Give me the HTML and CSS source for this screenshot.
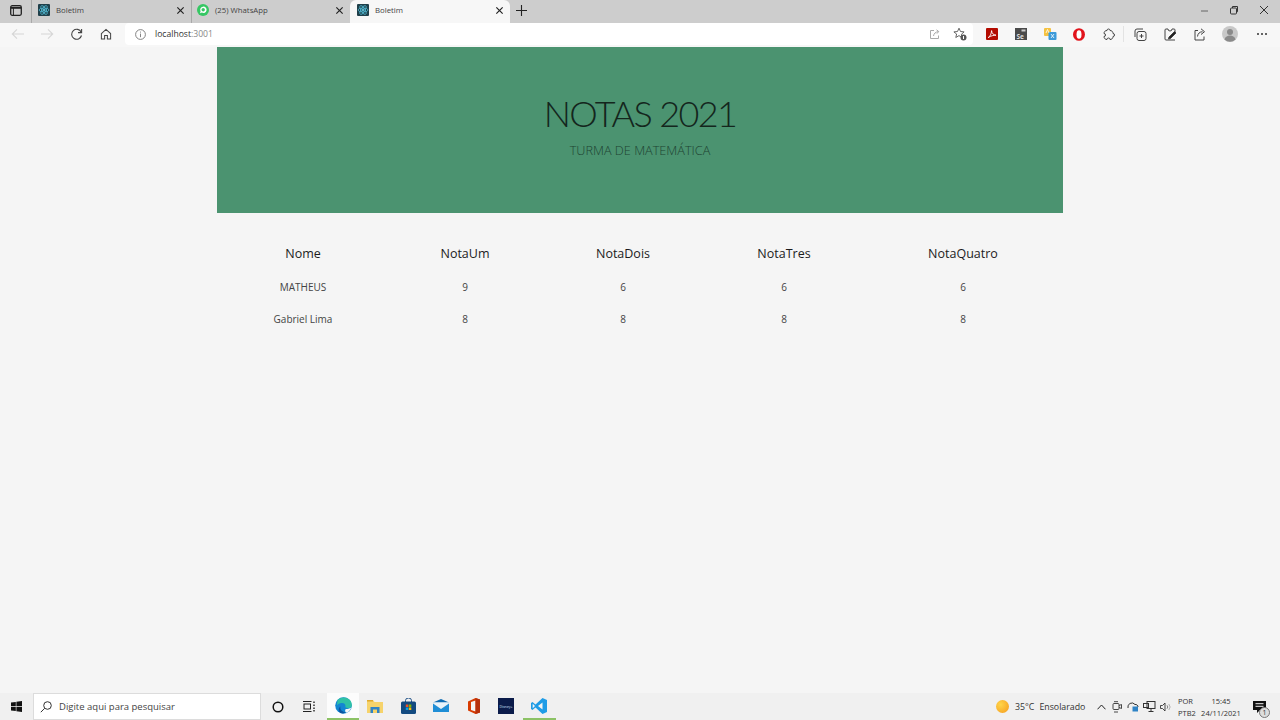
FILE: index.html
```html
<!DOCTYPE html>
<html lang="pt-BR">
<head>
    <meta charset="UTF-8">
    <meta name="viewport" content="width=device-width, initial-scale=1.0">
    <title>Boletim</title>
    <link rel="stylesheet" href="styles.css">
</head>
<body>
    <svg class="defs" width="0" height="0">
        <symbol id="react" viewBox="0 0 12 12">
            <rect width="12" height="12" rx="1" fill="#1f3f4a"/>
            <g fill="none" stroke="#4fb6cf" stroke-width=".8">
                <ellipse cx="6" cy="6" rx="5" ry="2"/>
                <ellipse cx="6" cy="6" rx="5" ry="2" transform="rotate(60 6 6)"/>
                <ellipse cx="6" cy="6" rx="5" ry="2" transform="rotate(120 6 6)"/>
            </g>
            <circle cx="6" cy="6" r="1.1" fill="#6fd0e6"/>
        </symbol>
        <symbol id="close" viewBox="0 0 10 10">
            <path d="M1.5 1.5l7 7M8.5 1.5l-7 7" stroke="#222" stroke-width="1.3" fill="none"/>
        </symbol>
    </svg>

    <!-- abas do navegador -->
    <div class="tabstrip">
        <div class="tab-menu">
            <svg width="12" height="11" viewBox="0 0 12 11"><rect x=".7" y=".7" width="10.6" height="9.6" rx="1.5" fill="none" stroke="#222" stroke-width="1.3"/><path d="M1 2.8h10" stroke="#222" stroke-width="2"/><path d="M3.4 3v7" stroke="#222" stroke-width="1"/></svg>
        </div>
        <div class="tab tab-first">
            <svg class="favicon" width="12" height="12"><use href="#react"/></svg>
            <span class="tab-title">Boletim</span>
            <svg class="tab-close" width="9" height="9"><use href="#close"/></svg>
        </div>
        <div class="tab tab-second">
            <svg class="favicon" width="12" height="12" viewBox="0 0 12 12"><circle cx="6" cy="6" r="6" fill="#35c763"/><path d="M3 9.2l.6-1.9a3.2 3.2 0 1 1 1.3 1.3z" fill="#fff"/><circle cx="6.2" cy="5.7" r="1.7" fill="#35c763"/></svg>
            <span class="tab-title">(25) WhatsApp</span>
            <svg class="tab-close" width="9" height="9"><use href="#close"/></svg>
        </div>
        <div class="tab tab-active">
            <svg class="favicon" width="12" height="12"><use href="#react"/></svg>
            <span class="tab-title">Boletim</span>
            <svg class="tab-close" width="9" height="9"><use href="#close"/></svg>
        </div>
        <div class="tab-new">
            <svg width="11" height="11" viewBox="0 0 11 11"><path d="M5.5 0v11M0 5.5h11" stroke="#222" stroke-width="1.1"/></svg>
        </div>
        <div class="win-controls">
            <div class="win-btn"><svg width="9" height="9" viewBox="0 0 9 9"><path d="M1 5h7" stroke="#666" stroke-width="1"/></svg></div>
            <div class="win-btn"><svg width="10" height="10" viewBox="0 0 10 10" fill="none" stroke="#333"><rect x="1.5" y="3" width="6" height="6" rx="1"/><path d="M3.5 3V1.5h5v5.2H7.5"/></svg></div>
            <div class="win-btn"><svg width="10" height="10" viewBox="0 0 10 10"><path d="M1 1l8 8M9 1l-8 8" stroke="#333" stroke-width="1"/></svg></div>
        </div>
    </div>

    <!-- barra de endereco -->
    <div class="toolbar">
        <div class="nav-btn"><svg width="14" height="12" viewBox="0 0 14 12" fill="none" stroke="#d6d6d6" stroke-width="1.1"><path d="M13 6H1.5M6 1.3L1.3 6 6 10.7"/></svg></div>
        <div class="nav-btn"><svg width="14" height="12" viewBox="0 0 14 12" fill="none" stroke="#d6d6d6" stroke-width="1.1"><path d="M1 6h11.5M8 1.3L12.7 6 8 10.7"/></svg></div>
        <div class="nav-btn"><svg width="13" height="13" viewBox="0 0 13 13" fill="none" stroke="#444" stroke-width="1.1"><path d="M11.2 4.2A5 5 0 1 0 11.5 7.5"/><path d="M11.6 1v3.6H8"/></svg></div>
        <div class="nav-btn"><svg width="12" height="12" viewBox="0 0 13 13" fill="none" stroke="#444" stroke-width="1.1"><path d="M1.5 6L6.5 1.5 11.5 6v5.8H8V8H5v3.8H1.5z"/></svg></div>
        <div class="address">
            <svg class="info" width="11" height="11" viewBox="0 0 11 11" fill="none" stroke="#777" stroke-width=".9"><circle cx="5.5" cy="5.5" r="4.9"/><path d="M5.5 4.6v3.6M5.5 2.6v1"/></svg>
            <span class="url">localhost<span class="url-port">:3001</span></span>
            <svg class="addr-share" width="11" height="11" viewBox="0 0 11 11" fill="none" stroke="#aaa"><path d="M5 1.5H1.5v8h8V6.5"/><path d="M4.5 7c.3-2.5 2-4 5-4.5M7.5 .8l2.2 1.7L8 4.6"/></svg>
            <svg class="addr-fav" width="14" height="14" viewBox="0 0 14 14"><path d="M6 1.2l1.5 3.3 3.6.4-2.7 2.4.8 3.5L6 8.6l-3.2 1.9.8-3.5L.9 4.9l3.6-.4z" fill="none" stroke="#555" stroke-width=".9"/><circle cx="10.5" cy="10.5" r="3" fill="#555"/><rect x="10" y="9" width="1" height="3" fill="#fff"/></svg>
        </div>
        <div class="ext-btn first-ext"><svg width="12" height="12" viewBox="0 0 12 12"><rect width="12" height="12" rx="1" fill="#b30b00"/><path d="M2.2 9.6C4 8.6 5.4 5.8 5.6 2.6c.2 2.8 1.6 4.2 4.4 4.6-2.5 0-5 .6-7.8 2.4z" fill="none" stroke="#fff" stroke-width=".9"/></svg></div>
        <div class="ext-btn"><svg width="12" height="12" viewBox="0 0 12 12"><rect width="12" height="12" fill="#4a4a4a"/><rect x="6.5" y="1.5" width="4" height="2" fill="#ccc"/><text x="1.5" y="10.5" class="ext-text">Se</text></svg></div>
        <div class="ext-btn"><svg width="14" height="14" viewBox="0 0 14 14"><rect x="1" y="1" width="7" height="8" rx="1" fill="#f5c242"/><rect x="5.5" y="5" width="8" height="8" rx="1" fill="#3d9ad9"/><path d="M8 11l3-4M8 7l3 4" stroke="#fff" stroke-width=".8"/><path d="M3 6l1.5-3.5L6 6" stroke="#fff" stroke-width=".8" fill="none"/></svg></div>
        <div class="ext-btn"><svg width="12" height="13" viewBox="0 0 12 13"><ellipse cx="6" cy="6.5" rx="6" ry="6.3" fill="#e2141c"/><ellipse cx="6" cy="6.5" rx="2.5" ry="4.3" fill="#fff"/></svg></div>
        <div class="ext-btn"><svg width="13" height="13" viewBox="0 0 13 13" fill="none" stroke="#444" stroke-width="1"><path d="M5 2.5a1.5 1.5 0 0 1 3 0c1.8 0 3 1.2 3 3a1.5 1.5 0 0 1 0 3c0 1.8-1.2 3-3 3a1.5 1.5 0 0 0-3 0c-1.8 0-3-1.2-3-3a1.5 1.5 0 0 0 0-3c0-1.8 1.2-3 3-3z"/></svg></div>
        <div class="tool-sep"></div>
        <div class="ext-btn"><svg width="13" height="13" viewBox="0 0 13 13" fill="none" stroke="#444" stroke-width="1"><rect x="3" y="3.5" width="9" height="9" rx="2"/><path d="M1 9V3a2 2 0 0 1 2-2h6M5.5 8h4M7.5 6v4"/></svg></div>
        <div class="ext-btn"><svg width="14" height="14" viewBox="0 0 14 14" fill="none" stroke="#444"><path d="M3 2h2a2 2 0 0 0 4 0h2a1 1 0 0 1 1 1v3M12 13H3a1 1 0 0 1-1-1V3a1 1 0 0 1 1-1"/><path d="M6 10l5.5-5.5 1.5 1.5-5.5 5.5-2 .5z" fill="#222"/></svg></div>
        <div class="ext-btn"><svg width="13" height="13" viewBox="0 0 13 13" fill="none" stroke="#444" stroke-width="1"><path d="M5 2.5H2V12h9V8.5"/><path d="M4.5 8.5c.3-3 2.2-4.7 5-4.8M8 .8l3.5 2.9L8 6.500"/></svg></div>
        <div class="avatar-btn"><svg width="16" height="16" viewBox="0 0 16 16"><circle cx="8" cy="8" r="8" fill="#c8c8c8"/><circle cx="8" cy="6" r="3" fill="#8a8a8a"/><path d="M2.5 13.5c.8-3 3-4 5.500-4s4.700 1 5.500 4a8 8 0 0 1-11 0z" fill="#8a8a8a"/></svg></div>
        <div class="more-btn"><span class="dot"></span><span class="dot"></span><span class="dot"></span></div>
    </div>

    <!-- pagina -->
    <div class="page">
        <div class="container">
            <header class="hero">
                <h1 class="hero-title">NOTAS 2021</h1>
                <p class="hero-sub">TURMA DE MATEMÁTICA</p>
            </header>
            <table class="grades">
                <colgroup>
                    <col class="col-nome">
                    <col class="col-um">
                    <col class="col-dois">
                    <col class="col-tres">
                    <col class="col-quatro">
                </colgroup>
                <thead>
                    <tr>
                        <th>Nome</th>
                        <th>NotaUm</th>
                        <th>NotaDois</th>
                        <th>NotaTres</th>
                        <th>NotaQuatro</th>
                    </tr>
                </thead>
                <tbody>
                    <tr>
                        <td>MATHEUS</td>
                        <td>9</td>
                        <td>6</td>
                        <td>6</td>
                        <td>6</td>
                    </tr>
                    <tr>
                        <td>Gabriel Lima</td>
                        <td>8</td>
                        <td>8</td>
                        <td>8</td>
                        <td>8</td>
                    </tr>
                </tbody>
            </table>
        </div>
    </div>

    <!-- barra de tarefas -->
    <div class="taskbar">
        <div class="start"><svg width="11" height="11" viewBox="0 0 11 11"><path d="M0 1.6L4.8.9v4.2H0zM5.4.8L11 0v5.1H5.4zM0 5.8h4.8v4.3L0 9.4zM5.4 5.8H11V11l-5.6-.8z" fill="#111"/></svg></div>
        <div class="search">
            <svg width="12" height="12" viewBox="0 0 12 12" fill="none" stroke="#333"><circle cx="7.5" cy="4.5" r="3.8"/><path d="M4.7 7.3L.8 11.2"/></svg>
            <span>Digite aqui para pesquisar</span>
        </div>
        <div class="task-btn cortana"><svg width="12" height="12" viewBox="0 0 12 12"><circle cx="6" cy="6" r="4.8" fill="none" stroke="#111" stroke-width="1.5"/></svg></div>
        <div class="task-btn"><svg width="12" height="11" viewBox="0 0 12 11" fill="none" stroke="#222"><path d="M0 .5h8.5M0 10.5h8.5"/><rect x="1" y="3" width="6.5" height="5"/><path d="M11 .5V2M11 3.5V5M11 6.5V8M11 9v1.5" stroke-width="1.4"/></svg></div>
        <div class="app app-on app-edge">
            <svg width="17" height="17" viewBox="0 0 17 17"><circle cx="8.5" cy="8.5" r="8.3" fill="#1386d2"/><path d="M2.5 3C5.5-.5 12-.5 15 3c2 2.5 2.2 5 1.5 7-1.5 1.5-5 1.5-6.300 0 1-2.500-1-4.500-3.700-4C4.500 6 3 7 2 8.500z" fill="#2fc1a6"/><path d="M10.800 12c1.800 0 3.700-.3 5.400-1.200-.7 2-2 3.800-4.200 5-2.200-.2-2.200-3-1.200-3.800z" fill="#f7f7f7"/><path d="M5.500 9.500c-.8 3 1.500 5.500 5.500 5.800-1.500.9-3.200 1.400-5 1-3-1.500-2.800-5.500-.5-6.800z" fill="#0b55a0"/></svg>
        </div>
        <div class="app">
            <svg width="16" height="14" viewBox="0 0 16 14"><path d="M0 1h6l1.5 2H16v11H0z" fill="#f6d36b"/><rect y="1" width="6" height="1.5" fill="#e0a92c"/><rect x="3.5" y="8" width="9" height="6" fill="#2f83c6"/><rect x="6" y="10.5" width="4" height="3.5" fill="#f6d36b"/></svg>
        </div>
        <div class="app">
            <svg width="15" height="16" viewBox="0 0 15 16"><path d="M4.5 4V2.5a3 2.5 0 0 1 6 0V4" fill="none" stroke="#1d4f86"/><rect y="3.5" width="15" height="12.5" rx="1.5" fill="#134a80"/><rect x="4.8" y="6.5" width="2.5" height="2.5" fill="#f25022"/><rect x="7.8" y="6.5" width="2.5" height="2.5" fill="#7fba00"/><rect x="4.8" y="9.5" width="2.5" height="2.5" fill="#00a4ef"/><rect x="7.8" y="9.5" width="2.5" height="2.5" fill="#ffb900"/></svg>
        </div>
        <div class="app">
            <svg width="16" height="13" viewBox="0 0 16 13"><path d="M0 3.5L8 0l8 3.5z" fill="#0f6cb3"/><path d="M0 3.5h16L8 9z" fill="#e8f4fc"/><path d="M0 13V4.5L8 10l8-5.5V13z" fill="#1f8ed6"/></svg>
        </div>
        <div class="app">
            <svg width="12" height="16" viewBox="0 0 12 16"><path d="M0 3.5L7.5 0 12 1.5v13L7.5 16 0 12.5z" fill="#d83b01"/><path d="M7.5 2.5L3 4v8l4.5 1.5z" fill="#f4f4f4"/><path d="M12 1.5v13l-4.5 1.5V0z" fill="#b7300b"/></svg>
        </div>
        <div class="app">
            <svg width="16" height="16" viewBox="0 0 16 16"><rect width="16" height="16" fill="#0b1b4a"/><text x="8" y="10" class="disney-text">Disney+</text></svg>
        </div>
        <div class="app app-on app-code">
            <svg width="16" height="16" viewBox="0 0 16 16"><path d="M11.5 0L16 2v12l-4.5 2-7-6.5L1.500 12 0 11V5l1.500-1 3 2.500z" fill="#1f9ce6"/><path d="M11.5 4.5L7 8l4.500 3.500z" fill="#f4f4f4"/><path d="M1.7 5.8L4 8l-2.300 2.200z" fill="#f4f4f4"/></svg>
        </div>
        <div class="tray">
            <div class="weather">
                <span class="sun"></span>
                <span class="temp">35°C</span>
                <span>Ensolarado</span>
            </div>
            <div class="tray-icon"><svg width="9" height="6" viewBox="0 0 9 6" fill="none" stroke="#222"><path d="M.5 5.3L4.5 1l4 4.3"/></svg></div>
            <div class="tray-icon"><svg width="10" height="12" viewBox="0 0 10 12" fill="none" stroke="#333" stroke-width=".9"><rect x="1" y="2.5" width="6" height="6" rx="1"/><path d="M7 4.5L9.5 3.500v4L7 6.500M2 .7h4M2 11h4"/></svg></div>
            <div class="tray-icon"><svg width="12" height="11" viewBox="0 0 12 11"><path d="M1 7a4 4 0 0 1 7-3.500A2.500 2.500 0 0 1 11 6" fill="none" stroke="#333"/><rect x="5.5" y="5.5" width="5.5" height="5" fill="#2f83c6"/></svg></div>
            <div class="tray-icon"><svg width="13" height="12" viewBox="0 0 13 12" fill="none" stroke="#333"><rect x=".5" y="2.5" width="5" height="4"/><rect x="4" y=".5" width="8" height="7"/><path d="M8 7.5v3M5.5 10.5h5"/></svg></div>
            <div class="tray-icon"><svg width="11" height="10" viewBox="0 0 11 10" fill="none" stroke="#333" stroke-width=".9"><path d="M.5 3.5h2L5 1v8L2.5 6.5h-2z"/><path d="M7 3.3a2.5 2.5 0 0 1 0 3.4" stroke="#777"/><path d="M8.8 2a4.5 4.5 0 0 1 0 6" stroke="#aaa"/></svg></div>
            <div class="lang"><span>POR</span><span>PTB2</span></div>
            <div class="clock"><span>15:45</span><span>24/11/2021</span></div>
            <div class="notify">
                <svg width="13" height="12" viewBox="0 0 13 12"><path d="M0 0h13v9H7l-3 3V9H0z" fill="#111"/><path d="M2.5 2.7h8M2.5 5.3h8" stroke="#f0f0f0"/></svg>
                <span class="notify-count">1</span>
            </div>
        </div>
    </div>
</body>
</html>
```

FILE: styles.css
```css
*{
    margin: 0;
    padding: 0;
    box-sizing: border-box;
}

body{
    width: 1280px;
    height: 720px;
    overflow: hidden;
    display: flex;
    flex-direction: column;
    background-color: #f5f5f5;
    font-family: "Open Sans", "Noto Sans", sans-serif;
    color: #222;
}

.defs{
    position: absolute;
}

/* abas */
.tabstrip{
    height: 23px;
    flex: none;
    display: flex;
    align-items: stretch;
    background-color: #cdcdcd;
}

.tab-menu{
    width: 31px;
    padding-bottom: 3px;
    display: flex;
    align-items: center;
    justify-content: center;
}

.tab{
    width: 160px;
    display: flex;
    align-items: center;
    padding: 0 6px 3px 6px;
    border-left: 1px solid #a9a9a9;
    font-size: 7.8px;
    color: #444;
}

.tab-second{
    width: 159px;
    padding-left: 5px;
}

.tab-active{
    padding-left: 7px;
    background-color: #f7f7f7;
    border-left: 0;
    border-radius: 6px 6px 0 0;
}

.favicon{
    flex: none;
    margin-right: 6px;
}

.tab-title{
    flex: 1;
    white-space: nowrap;
}

.tab-close{
    flex: none;
}

.tab-new{
    width: 22px;
    padding-bottom: 3px;
    display: flex;
    align-items: center;
    justify-content: center;
}

.win-controls{
    margin-left: auto;
    padding-right: 1px;
    padding-bottom: 3px;
    display: flex;
}

.win-btn{
    width: 30px;
    display: flex;
    align-items: center;
    justify-content: center;
}

/* barra de endereco */
.toolbar{
    height: 24px;
    flex: none;
    display: flex;
    align-items: center;
    padding-left: 3px;
    padding-bottom: 2px;
    background-color: #f7f7f7;
}

.nav-btn{
    width: 29.5px;
    height: 22px;
    display: flex;
    align-items: center;
    justify-content: center;
}

.address{
    width: 848px;
    height: 22px;
    margin-left: 4px;
    display: flex;
    align-items: center;
    padding-left: 10px;
    background-color: #fff;
    border-radius: 4px;
}

.url{
    margin-left: 9px;
    font-size: 8.6px;
    color: #333;
}

.url-port{
    color: #888;
}

.addr-share{
    margin-left: auto;
}

.addr-fav{
    margin-left: 13px;
    margin-right: 6px;
}

.ext-btn{
    width: 29.25px;
    height: 22px;
    display: flex;
    align-items: center;
    justify-content: center;
}

.first-ext{
    margin-left: 4px;
}

.tool-sep{
    width: 1px;
    height: 16px;
    margin-right: 2px;
    background-color: #e3e3e3;
}

.ext-text{
    font-size: 6.5px;
    font-weight: 700;
    fill: #ddd;
}

.avatar-btn{
    width: 32px;
    display: flex;
    justify-content: center;
}

.more-btn{
    width: 32px;
    display: flex;
    justify-content: center;
    gap: 2px;
}

.dot{
    width: 2px;
    height: 2px;
    border-radius: 50%;
    background-color: #333;
}

/* pagina */
.page{
    flex: 1;
}

.container{
    width: 846px;
    margin: 0 auto;
}

.hero{
    height: 166px;
    padding-top: 41px;
    text-align: center;
    background-color: #4b9370;
}

.hero-title{
    font-family: "Lato", "Open Sans", sans-serif;
    font-size: 36px;
    line-height: 50px;
    font-weight: 300;
    letter-spacing: -1.6px;
    color: #14261d;
}

.hero-sub{
    margin-top: 2px;
    font-size: 12.7px;
    line-height: 20px;
    font-weight: 300;
    color: #1e4432;
}

.grades{
    width: 846px;
    margin-top: 22px;
    border-collapse: collapse;
    table-layout: fixed;
}

.col-nome{
    width: 172px;
}

.col-um{
    width: 152px;
}

.col-dois{
    width: 164px;
}

.col-tres{
    width: 158px;
}

.col-quatro{
    width: 200px;
}

.grades th{
    height: 36px;
    font-size: 12.5px;
    font-weight: 400;
    color: #1c1c1c;
}

.grades td{
    height: 32px;
    font-size: 10px;
    text-align: center;
    color: #444;
}

/* barra de tarefas */
.taskbar{
    height: 27px;
    flex: none;
    display: flex;
    align-items: stretch;
    background-color: #f0f0f0;
    font-size: 8.8px;
    color: #333;
}

.start{
    width: 33px;
    display: flex;
    align-items: center;
    justify-content: center;
}

.search{
    width: 228px;
    display: flex;
    align-items: center;
    gap: 7px;
    padding-left: 6px;
    background-color: #fff;
    border: 1px solid #dcdcdc;
    font-size: 9.5px;
    color: #444;
}

.task-btn{
    width: 31px;
    display: flex;
    align-items: center;
    justify-content: center;
}

.cortana{
    margin-left: 1px;
}

.app{
    width: 32.75px;
    display: flex;
    align-items: center;
    justify-content: center;
    border-bottom: 2px solid transparent;
}

.app-on{
    border-bottom-color: #8cc265;
}

.app-edge{
    width: 32px;
    margin-left: 3px;
    background-color: #fcfcfc;
}

.disney-text{
    font-size: 3.5px;
    fill: #cfe0ff;
    text-anchor: middle;
}

.tray{
    margin-left: auto;
    display: flex;
    align-items: center;
}

.weather{
    width: 97px;
    display: flex;
    align-items: center;
}

.sun{
    width: 13px;
    height: 13px;
    margin-right: 6px;
    border-radius: 50%;
    background: radial-gradient(circle at 35% 35%, #ffd54a, #f59a1c);
}

.temp{
    margin-right: 5px;
}

.tray-icon{
    width: 16px;
    display: flex;
    justify-content: center;
}

.lang{
    width: 23px;
    margin-left: 5px;
    display: flex;
    flex-direction: column;
    font-size: 7.5px;
    line-height: 12px;
}

.clock{
    width: 40px;
    display: flex;
    flex-direction: column;
    align-items: center;
    font-size: 7.5px;
    line-height: 12px;
}

.notify{
    width: 39px;
    padding-left: 12px;
    position: relative;
    display: flex;
    align-items: center;
}

.notify-count{
    position: absolute;
    left: 18px;
    top: 6px;
    width: 11px;
    height: 11px;
    border-radius: 50%;
    border: 1px solid #777;
    background-color: #ddd;
    font-size: 7px;
    line-height: 9px;
    text-align: center;
}
```
